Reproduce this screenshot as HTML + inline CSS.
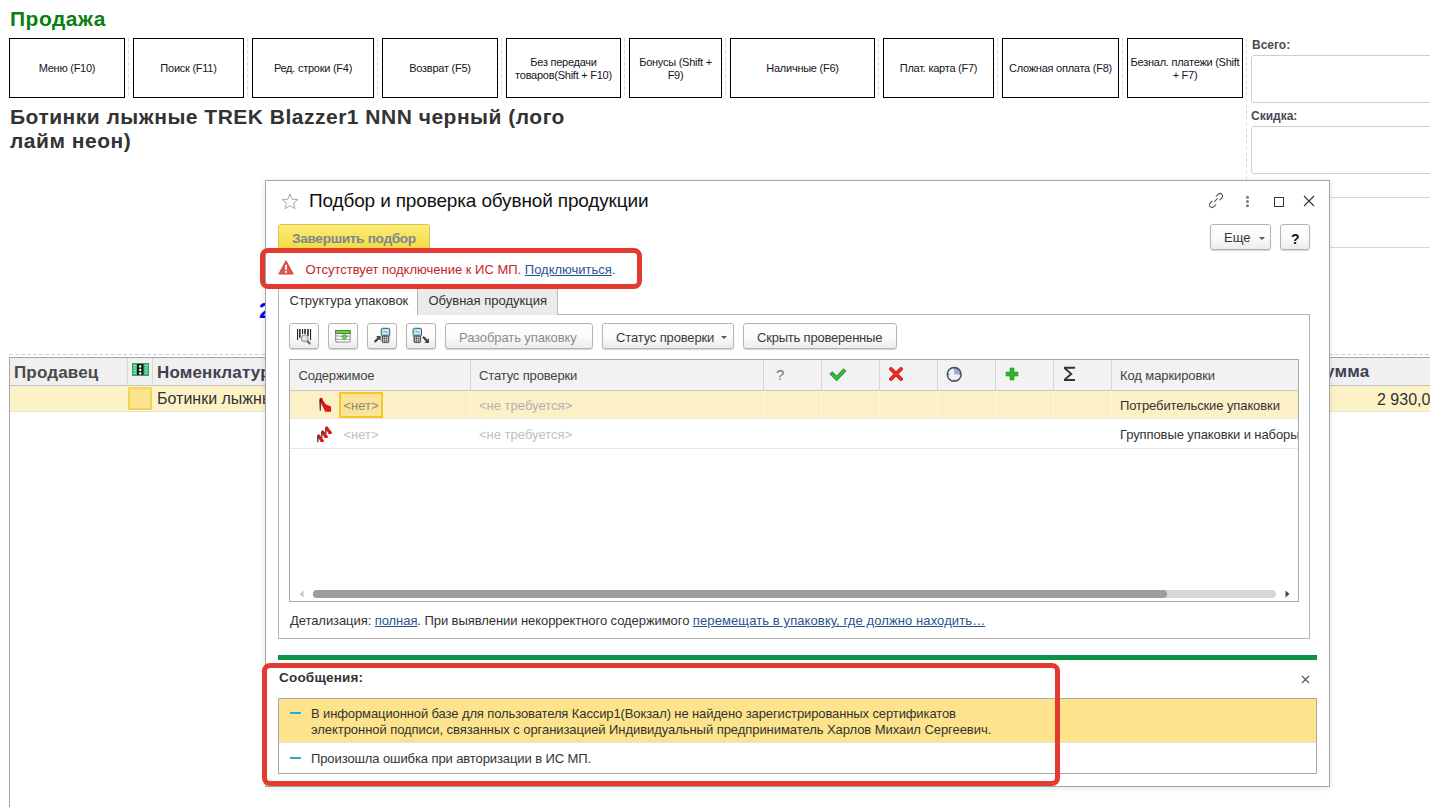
<!DOCTYPE html>
<html><head><meta charset="utf-8"><style>
html,body{margin:0;padding:0;}
body{width:1430px;height:807px;overflow:hidden;position:relative;background:#fff;font-family:"Liberation Sans",sans-serif;}
.a{position:absolute;}
.t{position:absolute;white-space:nowrap;}
.lnk{color:#2a5590;text-decoration:underline;}
</style></head><body>
<div class="t " style="left:10px;top:6.02px;font-size:21px;line-height:26px;color:#0b7f12;font-weight:700;letter-spacing:0.5px;">Продажа</div>
<div class="a" style="left:9px;top:38px;width:116px;height:60px;border:1px solid #000;background:#fff;box-sizing:border-box;"></div>
<div class="t" style="left:9px;width:116px;top:61.99px;font-size:11px;line-height:13px;letter-spacing:-0.25px;color:#141424;text-align:center;white-space:nowrap">Меню (F10)</div>
<div class="a" style="left:133px;top:38px;width:111px;height:60px;border:1px solid #000;background:#fff;box-sizing:border-box;"></div>
<div class="t" style="left:133px;width:111px;top:61.99px;font-size:11px;line-height:13px;letter-spacing:-0.25px;color:#141424;text-align:center;white-space:nowrap">Поиск (F11)</div>
<div class="a" style="left:252px;top:38px;width:122px;height:60px;border:1px solid #000;background:#fff;box-sizing:border-box;"></div>
<div class="t" style="left:252px;width:122px;top:61.99px;font-size:11px;line-height:13px;letter-spacing:-0.25px;color:#141424;text-align:center;white-space:nowrap">Ред. строки (F4)</div>
<div class="a" style="left:382px;top:38px;width:116px;height:60px;border:1px solid #000;background:#fff;box-sizing:border-box;"></div>
<div class="t" style="left:382px;width:116px;top:61.99px;font-size:11px;line-height:13px;letter-spacing:-0.25px;color:#141424;text-align:center;white-space:nowrap">Возврат (F5)</div>
<div class="a" style="left:506px;top:38px;width:115px;height:60px;border:1px solid #000;background:#fff;box-sizing:border-box;"></div>
<div class="t" style="left:506px;width:115px;top:55.99px;font-size:11px;line-height:13px;letter-spacing:-0.25px;color:#141424;text-align:center;white-space:nowrap">Без передачи<br>товаров(Shift + F10)</div>
<div class="a" style="left:629px;top:38px;width:93px;height:60px;border:1px solid #000;background:#fff;box-sizing:border-box;"></div>
<div class="t" style="left:629px;width:93px;top:55.99px;font-size:11px;line-height:13px;letter-spacing:-0.25px;color:#141424;text-align:center;white-space:nowrap">Бонусы (Shift +<br>F9)</div>
<div class="a" style="left:730px;top:38px;width:145px;height:60px;border:1px solid #000;background:#fff;box-sizing:border-box;"></div>
<div class="t" style="left:730px;width:145px;top:61.99px;font-size:11px;line-height:13px;letter-spacing:-0.25px;color:#141424;text-align:center;white-space:nowrap">Наличные (F6)</div>
<div class="a" style="left:883px;top:38px;width:111px;height:60px;border:1px solid #000;background:#fff;box-sizing:border-box;"></div>
<div class="t" style="left:883px;width:111px;top:61.99px;font-size:11px;line-height:13px;letter-spacing:-0.25px;color:#141424;text-align:center;white-space:nowrap">Плат. карта (F7)</div>
<div class="a" style="left:1002px;top:38px;width:117px;height:60px;border:1px solid #000;background:#fff;box-sizing:border-box;"></div>
<div class="t" style="left:1002px;width:117px;top:61.99px;font-size:11px;line-height:13px;letter-spacing:-0.25px;color:#141424;text-align:center;white-space:nowrap">Сложная оплата (F8)</div>
<div class="a" style="left:1127px;top:38px;width:116px;height:60px;border:1px solid #000;background:#fff;box-sizing:border-box;"></div>
<div class="t" style="left:1127px;width:116px;top:55.99px;font-size:11px;line-height:13px;letter-spacing:-0.25px;color:#141424;text-align:center;white-space:nowrap">Безнал. платежи (Shift<br>+ F7)</div>
<div class="a" style="left:128px;top:38px;width:1px;height:60px;background:repeating-linear-gradient(#dedede 0 4px,transparent 4px 6px);"></div>
<div class="a" style="left:247px;top:38px;width:1px;height:60px;background:repeating-linear-gradient(#dedede 0 4px,transparent 4px 6px);"></div>
<div class="a" style="left:377px;top:38px;width:1px;height:60px;background:repeating-linear-gradient(#dedede 0 4px,transparent 4px 6px);"></div>
<div class="a" style="left:501px;top:38px;width:1px;height:60px;background:repeating-linear-gradient(#dedede 0 4px,transparent 4px 6px);"></div>
<div class="a" style="left:624px;top:38px;width:1px;height:60px;background:repeating-linear-gradient(#dedede 0 4px,transparent 4px 6px);"></div>
<div class="a" style="left:725px;top:38px;width:1px;height:60px;background:repeating-linear-gradient(#dedede 0 4px,transparent 4px 6px);"></div>
<div class="a" style="left:878px;top:38px;width:1px;height:60px;background:repeating-linear-gradient(#dedede 0 4px,transparent 4px 6px);"></div>
<div class="a" style="left:997px;top:38px;width:1px;height:60px;background:repeating-linear-gradient(#dedede 0 4px,transparent 4px 6px);"></div>
<div class="a" style="left:1122px;top:38px;width:1px;height:60px;background:repeating-linear-gradient(#dedede 0 4px,transparent 4px 6px);"></div>
<div class="a" style="left:1246px;top:38px;width:1px;height:320px;background:repeating-linear-gradient(#dedede 0 4px,transparent 4px 6px);"></div>
<div class="t " style="left:1252px;top:38.34px;font-size:12px;line-height:15px;color:#4a4a52;font-weight:700;">Всего:</div>
<div class="a" style="left:1251px;top:55px;width:200px;height:48px;border:1px solid #cfcfcf;border-radius:3px;box-sizing:border-box;background:#fff;"></div>
<div class="t " style="left:1251px;top:109.34px;font-size:12px;line-height:15px;color:#4a4a52;font-weight:700;">Скидка:</div>
<div class="a" style="left:1251px;top:126px;width:200px;height:48px;border:1px solid #cfcfcf;border-radius:3px;box-sizing:border-box;background:#fff;"></div>
<div class="a" style="left:1251px;top:197px;width:200px;height:51px;border:1px solid #d6d6d6;border-radius:3px;box-sizing:border-box;background:#fff;"></div>
<div class="t " style="left:10px;top:105.02px;font-size:21px;line-height:24px;color:#333;font-weight:700;letter-spacing:0.5px;">Ботинки лыжные TREK Blazzer1 NNN черный (лого<br>лайм неон)</div>
<div class="t " style="left:259px;top:297.37px;font-size:22px;line-height:28px;color:#0000f0;font-weight:700;">2</div>
<div class="a" style="left:9px;top:354px;width:1421px;height:1px;background:repeating-linear-gradient(90deg,#d0d0d0 0 4px,transparent 4px 6px);"></div>
<div class="a" style="left:9px;top:357px;width:1421px;height:1px;background:#a6a6a6;"></div>
<div class="a" style="left:9px;top:357px;width:1px;height:450px;background:#a6a6a6;"></div>
<div class="a" style="left:10px;top:358px;width:1420px;height:27px;background:#f0f0f0;"></div>
<div class="a" style="left:10px;top:385px;width:1420px;height:1px;background:#c4c4c4;"></div>
<div class="a" style="left:127px;top:358px;width:1px;height:27px;background:#d8d8d8;"></div>
<div class="a" style="left:152px;top:358px;width:1px;height:27px;background:#d8d8d8;"></div>
<div class="t " style="left:14px;top:361.71px;font-size:17px;line-height:21px;color:#4a4a4a;font-weight:700;letter-spacing:0.15px;">Продавец</div>
<div class="t " style="left:157px;top:361.71px;font-size:17px;line-height:21px;color:#404050;font-weight:700;letter-spacing:0.15px;">Номенклатура</div>
<div class="t " style="left:1312.5px;top:360.81px;font-size:17px;line-height:21px;color:#404050;font-weight:700;letter-spacing:0.2px;">Сумма</div>
<div class="a" style="left:10px;top:386px;width:1420px;height:25px;background:#fdf2c6;"></div>
<div class="a" style="left:128px;top:387px;width:24px;height:23px;background:#fde490;border:2px solid #f8d456;box-sizing:border-box;"></div>
<div class="a" style="left:10px;top:411px;width:1420px;height:1px;background:#e4e4e4;"></div>
<div class="t " style="left:157px;top:389.45px;font-size:16px;line-height:20px;color:#333;">Ботинки лыжные</div>
<div class="t " style="left:1377px;top:389.95px;font-size:16px;line-height:20px;color:#333;">2 930,00</div>
<svg class="a" style="left:132px;top:363px" width="17" height="13" viewBox="0 0 17 13">
<rect x="0.5" y="0.5" width="16" height="12" fill="#42bc7c" stroke="#34a068" stroke-width="1"/>
<g fill="#a8e8c4"><rect x="1.5" y="2" width="2.5" height="1"/><rect x="1.5" y="4.5" width="2.5" height="1"/><rect x="1.5" y="7" width="2.5" height="1"/><rect x="1.5" y="9.5" width="2.5" height="1"/>
<rect x="13" y="2" width="2.5" height="1"/><rect x="13" y="4.5" width="2.5" height="1"/><rect x="13" y="7" width="2.5" height="1"/><rect x="13" y="9.5" width="2.5" height="1"/></g>
<rect x="5" y="1" width="6.5" height="11" fill="#151515"/>
<g fill="#f4f4f4"><path d="M8.2 1.8 L9.8 3.4 L8.2 5 L6.6 3.4 Z"/><path d="M8.2 5.3 L9.8 6.9 L8.2 8.5 L6.6 6.9 Z"/><path d="M8.2 8.8 L9.8 10.4 L8.2 12 L6.6 10.4 Z"/></g>
</svg>
<div class="a" style="left:265px;top:180px;width:1065px;height:607px;background:#fff;border:1px solid #a4a4a4;box-sizing:border-box;box-shadow:0 1px 6px rgba(0,0,0,0.11);"></div>
<svg class="a" style="left:281px;top:193px" width="18" height="17" viewBox="0 0 18 17">
<path d="M9 1.2 L11.2 6.3 L16.8 6.6 L12.5 10.2 L13.9 15.7 L9 12.7 L4.1 15.7 L5.5 10.2 L1.2 6.6 L6.8 6.3 Z" fill="none" stroke="#a8a8a8" stroke-width="1"/>
</svg>
<div class="t " style="left:309px;top:189.31px;font-size:19px;line-height:24px;color:#111;letter-spacing:-0.15px;">Подбор и проверка обувной продукции</div>
<svg class="a" style="left:1207px;top:192px" width="18" height="17" viewBox="0 0 18 17">
<g fill="none" stroke="#555" stroke-width="1.1" stroke-linecap="round">
<path d="M7.6 9.4 L10.4 6.6"/>
<path d="M9.2 4.2 L11.1 2.3 a2.6 2.6 0 0 1 3.7 3.7 L12.9 7.9"/>
<path d="M8.8 12.8 L6.9 14.7 a2.6 2.6 0 0 1 -3.7 -3.7 L5.1 9.1"/>
</g></svg>
<svg class="a" style="left:1245px;top:195px" width="5" height="13" viewBox="0 0 5 13">
<g fill="#7a7a7a"><circle cx="2.5" cy="2.3" r="1.5"/><circle cx="2.5" cy="6.5" r="1.5"/><circle cx="2.5" cy="10.7" r="1.5"/></g></svg>
<div class="a" style="left:1274px;top:197px;width:9.5px;height:9.5px;border:1.2px solid #333;box-sizing:border-box;"></div>
<svg class="a" style="left:1303px;top:195px" width="12" height="12" viewBox="0 0 12 12">
<path d="M1 1 L11 11 M11 1 L1 11" stroke="#333" stroke-width="1.1"/></svg>
<div class="a" style="left:278px;top:224px;width:152px;height:27px;background:linear-gradient(#fcec78,#f4da40);border:1px solid #d6c250;border-radius:3px;box-sizing:border-box;"></div>
<div class="t " style="left:292px;top:229.55px;font-size:13.7px;line-height:17px;color:#7d8690;font-weight:700;letter-spacing:-0.35px;">Завершить подбор</div>
<div class="a" style="left:1210px;top:224px;width:61px;height:26px;background:linear-gradient(#ffffff 0%,#fbfbfb 50%,#ececec 100%);border:1px solid #b4b4b4;border-radius:3px;box-sizing:border-box;box-shadow:0 1px 1px rgba(0,0,0,0.18);"></div>
<div class="t " style="left:1224px;top:230.39px;font-size:13px;line-height:16px;color:#333;">Еще</div>
<svg class="a" style="left:1259px;top:237px" width="6" height="3" viewBox="0 0 6 3"><path d="M0 0 H6 L3 3 Z" fill="#555"/></svg>
<div class="a" style="left:1280px;top:224px;width:30px;height:26px;background:linear-gradient(#ffffff 0%,#fbfbfb 50%,#ececec 100%);border:1px solid #b4b4b4;border-radius:3px;box-sizing:border-box;box-shadow:0 1px 1px rgba(0,0,0,0.18);"></div>
<div class="t " style="left:1291px;top:229.65px;font-size:14px;line-height:18px;color:#111;font-weight:700;">?</div>
<svg class="a" style="left:278px;top:260px" width="16" height="15" viewBox="0 0 16 15">
<path d="M8 1 L15 14 H1 Z" fill="#e05550" stroke="#d04844" stroke-width="1.2" stroke-linejoin="round"/>
<rect x="7.1" y="4.8" width="1.8" height="5" fill="#fff"/><rect x="7.1" y="11" width="1.8" height="1.8" fill="#fff"/>
</svg>
<div class="t " style="left:305.5px;top:262.39px;font-size:13px;line-height:16px;color:#c41e2a;">Отсутствует подключение к ИС МП. <span style="color:#2a5590;text-decoration:underline">Подключиться</span><span style="color:#555">.</span></div>
<div class="a" style="left:278px;top:314px;width:1032px;height:325px;border:1px solid #b4b4b4;box-sizing:border-box;background:#fff;"></div>
<div class="a" style="left:417px;top:288px;width:141px;height:27px;background:#ebebeb;border:1px solid #bcbcbc;border-bottom:none;border-radius:2px 2px 0 0;box-sizing:border-box;"></div>
<div class="a" style="left:278px;top:288px;width:140px;height:27px;background:#fff;border:1px solid #b4b4b4;border-bottom:none;border-radius:2px 2px 0 0;box-sizing:border-box;"></div>
<div class="t " style="left:289.5px;top:293.49px;font-size:13px;line-height:16px;color:#333;">Структура упаковок</div>
<div class="t " style="left:428.5px;top:293.19px;font-size:13px;line-height:16px;color:#333;">Обувная продукция</div>
<div class="a" style="left:289px;top:323px;width:30px;height:26px;background:linear-gradient(#ffffff 0%,#fbfbfb 50%,#ececec 100%);border:1px solid #b4b4b4;border-radius:3px;box-sizing:border-box;box-shadow:0 1px 1px rgba(0,0,0,0.18);"></div>
<div class="a" style="left:328px;top:323px;width:30px;height:26px;background:linear-gradient(#ffffff 0%,#fbfbfb 50%,#ececec 100%);border:1px solid #b4b4b4;border-radius:3px;box-sizing:border-box;box-shadow:0 1px 1px rgba(0,0,0,0.18);"></div>
<div class="a" style="left:367px;top:323px;width:30px;height:26px;background:linear-gradient(#ffffff 0%,#fbfbfb 50%,#ececec 100%);border:1px solid #b4b4b4;border-radius:3px;box-sizing:border-box;box-shadow:0 1px 1px rgba(0,0,0,0.18);"></div>
<div class="a" style="left:406px;top:323px;width:30px;height:26px;background:linear-gradient(#ffffff 0%,#fbfbfb 50%,#ececec 100%);border:1px solid #b4b4b4;border-radius:3px;box-sizing:border-box;box-shadow:0 1px 1px rgba(0,0,0,0.18);"></div>
<div class="a" style="left:445px;top:323px;width:148px;height:26px;background:linear-gradient(#ffffff 0%,#fbfbfb 50%,#ececec 100%);border:1px solid #b4b4b4;border-radius:3px;box-sizing:border-box;box-shadow:0 1px 1px rgba(0,0,0,0.18);"></div>
<div class="t " style="left:459px;top:329.99px;font-size:13px;line-height:16px;color:#8c8c8c;letter-spacing:-0.1px;">Разобрать упаковку</div>
<div class="a" style="left:602px;top:323px;width:132px;height:26px;background:linear-gradient(#ffffff 0%,#fbfbfb 50%,#ececec 100%);border:1px solid #b4b4b4;border-radius:3px;box-sizing:border-box;box-shadow:0 1px 1px rgba(0,0,0,0.18);"></div>
<div class="t " style="left:616px;top:329.99px;font-size:13px;line-height:16px;color:#3a3a3a;letter-spacing:-0.15px;">Статус проверки</div>
<svg class="a" style="left:721px;top:336px" width="6" height="3" viewBox="0 0 6 3"><path d="M0 0 H6 L3 3 Z" fill="#555"/></svg>
<div class="a" style="left:743px;top:323px;width:154px;height:26px;background:linear-gradient(#ffffff 0%,#fbfbfb 50%,#ececec 100%);border:1px solid #b4b4b4;border-radius:3px;box-sizing:border-box;box-shadow:0 1px 1px rgba(0,0,0,0.18);"></div>
<div class="t " style="left:757px;top:329.99px;font-size:13px;line-height:16px;color:#3a3a3a;letter-spacing:-0.2px;">Скрыть проверенные</div>
<svg class="a" style="left:293px;top:325px" width="24" height="22" viewBox="0 0 24 22">
<g fill="#262626"><rect x="4" y="4" width="1.1" height="11"/><rect x="6.1" y="4" width="1.5" height="8.7"/><rect x="9" y="4" width="1.1" height="5"/><rect x="11.2" y="4" width="1.6" height="5"/><rect x="14.2" y="4" width="1.6" height="6.9"/><rect x="17" y="4" width="1.1" height="11"/></g>
<path d="M14.2 15.8 L16.6 18.4" stroke="#6a625c" stroke-width="2.2" stroke-linecap="round"/>
<circle cx="11.8" cy="13.3" r="3.3" fill="#d8e6f8" stroke="#b09488" stroke-width="1.2"/>
</svg>
<svg class="a" style="left:331px;top:325px" width="24" height="22" viewBox="0 0 24 22">
<rect x="4.6" y="5.5" width="14.6" height="11.6" rx="0.8" fill="#fff" stroke="#8a8a8a" stroke-width="1"/>
<rect x="4.6" y="5.5" width="14.6" height="3" fill="#78c868" stroke="#3c8a22" stroke-width="1"/>
<g stroke="#9a9a9a" stroke-width="0.9"><line x1="5" y1="11.1" x2="19" y2="11.1"/><line x1="5" y1="14.4" x2="19" y2="14.4"/></g>
<g stroke="#777" stroke-width="0.8"><line x1="6.2" y1="10" x2="6.2" y2="11"/><line x1="6.2" y1="13.3" x2="6.2" y2="14.3"/><line x1="6.2" y1="16" x2="6.2" y2="17"/></g>
<path d="M12.2 7.8 H14.6 V11 H16.8 L13.4 15.3 L10 11 H12.2 Z" fill="#5cd04c" stroke="#48a838" stroke-width="0.6"/>
</svg>
<svg class="a" style="left:370px;top:325px" width="24" height="22" viewBox="0 0 24 22">
<rect x="11.3" y="3.3" width="8.4" height="8" rx="1.3" fill="#a8dcf4" stroke="#485460" stroke-width="1"/>
<rect x="12.5" y="4.5" width="6" height="4.6" fill="#c4ecfc"/>
<path d="M13.3 6 L17.6 7.6" stroke="#5a9cd0" stroke-width="0.9"/>
<rect x="11.600000000000001" y="9.4" width="7.8" height="1.3" fill="#9cc8a0"/>
<rect x="12.200000000000001" y="10.8" width="6.6" height="6.8" rx="1" fill="#4a4a4a" stroke="#3a3a3a" stroke-width="0.8"/>
<g fill="#f2dc48"><rect x="13.0" y="11.6" width="1.3" height="1.4"/><rect x="14.9" y="11.6" width="1.3" height="1.4"/></g>
<g fill="#f4f4f4"><rect x="16.8" y="11.6" width="1.3" height="1.4"/><rect x="13.0" y="13.6" width="1.3" height="1.3"/><rect x="14.9" y="13.6" width="1.3" height="1.3"/><rect x="16.8" y="13.6" width="1.3" height="1.3"/><rect x="13.0" y="15.4" width="1.3" height="1.3"/><rect x="14.9" y="15.4" width="1.3" height="1.3"/><rect x="16.8" y="15.4" width="1.3" height="1.3"/></g>
<path d="M4.6 17 L9 12.6" stroke="#454545" stroke-width="2.3"/><path d="M6 11.1 H10.7 V15.8 Z" fill="#454545"/>
</svg>
<svg class="a" style="left:406px;top:325px" width="24" height="22" viewBox="0 0 24 22">
<rect x="7.1" y="3.3" width="8.4" height="8" rx="1.3" fill="#a8dcf4" stroke="#485460" stroke-width="1"/>
<rect x="8.299999999999999" y="4.5" width="6" height="4.6" fill="#c4ecfc"/>
<path d="M9.1 6 L13.399999999999999 7.6" stroke="#5a9cd0" stroke-width="0.9"/>
<rect x="7.3999999999999995" y="9.4" width="7.8" height="1.3" fill="#9cc8a0"/>
<rect x="8.0" y="10.8" width="6.6" height="6.8" rx="1" fill="#4a4a4a" stroke="#3a3a3a" stroke-width="0.8"/>
<g fill="#f2dc48"><rect x="8.8" y="11.6" width="1.3" height="1.4"/><rect x="10.7" y="11.6" width="1.3" height="1.4"/></g>
<g fill="#f4f4f4"><rect x="12.6" y="11.6" width="1.3" height="1.4"/><rect x="8.8" y="13.6" width="1.3" height="1.3"/><rect x="10.7" y="13.6" width="1.3" height="1.3"/><rect x="12.6" y="13.6" width="1.3" height="1.3"/><rect x="8.8" y="15.4" width="1.3" height="1.3"/><rect x="10.7" y="15.4" width="1.3" height="1.3"/><rect x="12.6" y="15.4" width="1.3" height="1.3"/></g>
<path d="M17 11.8 L21.3 16.1" stroke="#454545" stroke-width="2.3"/><path d="M23 13.2 V17.9 H18.3 Z" fill="#454545"/>
</svg>
<div class="a" style="left:289px;top:359px;width:1010px;height:243px;border:1px solid #a8a8a8;box-sizing:border-box;background:#fff;"></div>
<div class="a" style="left:290px;top:360px;width:1008px;height:30px;background:#f2f2f2;"></div>
<div class="a" style="left:290px;top:390px;width:1008px;height:1px;background:#c8c8c8;"></div>
<div class="a" style="left:470px;top:360px;width:1px;height:30px;background:#d4d4d4;"></div>
<div class="a" style="left:763px;top:360px;width:1px;height:30px;background:#d4d4d4;"></div>
<div class="a" style="left:821px;top:360px;width:1px;height:30px;background:#d4d4d4;"></div>
<div class="a" style="left:879px;top:360px;width:1px;height:30px;background:#d4d4d4;"></div>
<div class="a" style="left:937px;top:360px;width:1px;height:30px;background:#d4d4d4;"></div>
<div class="a" style="left:995px;top:360px;width:1px;height:30px;background:#d4d4d4;"></div>
<div class="a" style="left:1053px;top:360px;width:1px;height:30px;background:#d4d4d4;"></div>
<div class="a" style="left:1111px;top:360px;width:1px;height:30px;background:#d4d4d4;"></div>
<div class="t " style="left:298.5px;top:367.69px;font-size:13px;line-height:16px;color:#444;letter-spacing:-0.2px;">Содержимое</div>
<div class="t " style="left:479px;top:367.69px;font-size:13px;line-height:16px;color:#444;letter-spacing:-0.15px;">Статус проверки</div>
<div class="t " style="left:1120px;top:367.69px;font-size:13px;line-height:16px;color:#444;letter-spacing:-0.1px;">Код маркировки</div>
<div class="t " style="left:776px;top:365.30px;font-size:15px;line-height:19px;color:#777;">?</div>
<svg class="a" style="left:826px;top:362px" width="24" height="24" viewBox="0 0 24 24">
<path d="M6.2 12 L10.7 16.4 L17.6 9" fill="none" stroke="#4a7a4a" stroke-width="4" stroke-linejoin="miter" stroke-linecap="square"/>
<path d="M6.2 12 L10.7 16.4 L17.6 9" fill="none" stroke="#22c428" stroke-width="2.6" stroke-linejoin="miter" stroke-linecap="square"/>
</svg>
<svg class="a" style="left:889px;top:367px" width="14" height="14" viewBox="0 0 14 14">
<path d="M2 2 L12 12 M12 2 L2 12" stroke="#b81818" stroke-width="3.8" stroke-linecap="round"/>
<path d="M2 2 L12 12 M12 2 L2 12" stroke="#e8302c" stroke-width="2.4" stroke-linecap="round"/>
</svg>
<svg class="a" style="left:942px;top:362px" width="24" height="24" viewBox="0 0 24 24">
<path d="M12.2 12.35 V5.5 A6.85 6.85 0 0 1 19.05 12.35 Z" fill="#94acd8"/>
<circle cx="12.2" cy="12.35" r="6.9" fill="none" stroke="#3f4c58" stroke-width="1.5"/>
<g stroke="#d84050" stroke-width="1.2"><line x1="12.2" y1="5.6" x2="12.2" y2="7.2"/><line x1="17.3" y1="12.35" x2="18.9" y2="12.35"/><line x1="12.2" y1="17.4" x2="12.2" y2="19"/></g>
<line x1="5.6" y1="12.35" x2="7.3" y2="12.35" stroke="#555" stroke-width="1.1"/>
</svg>
<svg class="a" style="left:1005px;top:367px" width="14" height="14" viewBox="0 0 14 14">
<path d="M5 1 H9 V5 H13 V9 H9 V13 H5 V9 H1 V5 H5 Z" fill="#2fb52f" stroke="#1e9a1e" stroke-width="0.6"/>
</svg>
<svg class="a" style="left:1058px;top:362px" width="24" height="24" viewBox="0 0 24 24">
<path d="M6 5.8 H17 M6.7 6.2 L13.2 11.9 L6.7 17.6 M6 18 H17" fill="none" stroke="#2a343c" stroke-width="1.9" stroke-linejoin="miter"/>
</svg>
<div class="a" style="left:290px;top:391px;width:1008px;height:27px;background:#fcf1c6;"></div>
<div class="a" style="left:470px;top:391px;width:1px;height:27px;background:#fdf7e2;"></div>
<div class="a" style="left:763px;top:391px;width:1px;height:27px;background:#fdf7e2;"></div>
<div class="a" style="left:821px;top:391px;width:1px;height:27px;background:#fdf7e2;"></div>
<div class="a" style="left:879px;top:391px;width:1px;height:27px;background:#fdf7e2;"></div>
<div class="a" style="left:937px;top:391px;width:1px;height:27px;background:#fdf7e2;"></div>
<div class="a" style="left:995px;top:391px;width:1px;height:27px;background:#fdf7e2;"></div>
<div class="a" style="left:1053px;top:391px;width:1px;height:27px;background:#fdf7e2;"></div>
<div class="a" style="left:1111px;top:391px;width:1px;height:27px;background:#fdf7e2;"></div>
<div class="a" style="left:290px;top:418px;width:1008px;height:1px;background:#e6e6e6;"></div>
<div class="a" style="left:290px;top:448px;width:1008px;height:1px;background:#e6e6e6;"></div>
<div class="a" style="left:339px;top:392px;width:44px;height:26px;background:#fde39a;border:2px solid #f6c52a;box-sizing:border-box;"></div>
<div class="t " style="left:343.5px;top:397.99px;font-size:13px;line-height:16px;color:#8a8a80;">&lt;нет&gt;</div>
<div class="t " style="left:479px;top:397.99px;font-size:13px;line-height:16px;color:#b0b0b0;">&lt;не требуется&gt;</div>
<div class="t " style="left:1120px;top:398.09px;font-size:13px;line-height:16px;color:#333;letter-spacing:-0.1px;">Потребительские упаковки</div>
<div class="t " style="left:343.5px;top:426.99px;font-size:13px;line-height:16px;color:#c0c0c0;">&lt;нет&gt;</div>
<div class="t " style="left:479px;top:426.99px;font-size:13px;line-height:16px;color:#c0c0c0;">&lt;не требуется&gt;</div>
<div class="a" style="left:1111px;top:420px;width:187px;height:28px;overflow:hidden">
<div class="t " style="left:9px;top:6.99px;font-size:13px;line-height:16px;color:#333;letter-spacing:-0.1px;">Групповые упаковки и наборы</div>
</div>
<svg class="a" style="left:314px;top:394px" width="22" height="22" viewBox="0 0 22 22">
<path d="M5.3 5 C5.6 3.5 7.6 3.2 8.3 4.3 L9.4 7 L11.2 9.8 C12.6 11.2 15 11.6 16.6 12.2 L17.1 13 L17.1 17.7 L10.9 17.7 L10.4 16 L9 13 L7.4 10.2 L6.6 7 Z" fill="#e4141a"/>
<path d="M6.8 4.6 L8.6 7.6 L10.6 10.6" stroke="#a80c10" stroke-width="0.8" fill="none"/>
<path d="M5.4 5.8 L6.8 5.8 L6.7 16.8 L5.8 16.8 Z" fill="#0a0a0a"/>
</svg>
<svg class="a" style="left:313px;top:422px" width="24" height="24" viewBox="0 0 24 24">
<g transform="translate(12.3 4.3)"><path d="M0.3 0.4 C0.7 -0.4 2 -0.3 2.6 0.7 L5 4.1 C5.9 4.7 6.5 5.2 6.5 6.2 L6.5 7.6 L3.1 7.6 C2.8 6 2.1 5 1.1 4.4 Z" fill="#e4141a"/><path d="M0 1.2 L1 1.2 L1.1 8 L0.1 8 Z" fill="#000"/></g>
<g transform="translate(8.3 8.3)"><path d="M0.3 0.4 C0.7 -0.4 2 -0.3 2.6 0.7 L5 4.1 C5.9 4.7 6.5 5.2 6.5 6.2 L6.5 7.6 L3.1 7.6 C2.8 6 2.1 5 1.1 4.4 Z" fill="#e4141a"/><path d="M0 1.2 L1 1.2 L1.1 8 L0.1 8 Z" fill="#000"/></g>
<g transform="translate(4.3 12.3)"><path d="M0.3 0.4 C0.7 -0.4 2 -0.3 2.6 0.7 L5 4.1 C5.9 4.7 6.5 5.2 6.5 6.2 L6.5 7.6 L3.1 7.6 C2.8 6 2.1 5 1.1 4.4 Z" fill="#e4141a"/><path d="M0 1.2 L1 1.2 L1.1 8 L0.1 8 Z" fill="#000"/></g>
</svg>
<div class="a" style="left:313px;top:590px;width:963px;height:8px;background:#d8d8d8;border-radius:4px;"></div>
<div class="a" style="left:313px;top:590px;width:854px;height:8px;background:#9e9e9e;border-radius:4px;"></div>
<svg class="a" style="left:299px;top:590px" width="5" height="8" viewBox="0 0 5 8"><path d="M4.5 0.5 V7.5 L0.5 4 Z" fill="#c8c8c8"/></svg>
<svg class="a" style="left:1285px;top:590px" width="5" height="8" viewBox="0 0 5 8"><path d="M0.5 0.5 V7.5 L4.5 4 Z" fill="#444"/></svg>
<div class="t " style="left:290px;top:613.39px;font-size:13px;line-height:16px;color:#333;letter-spacing:-0.07px;">Детализация: <span class="lnk">полная</span>. При выявлении некорректного содержимого <span class="lnk" style="letter-spacing:0.1px">перемещать в упаковку, где должно находить…</span></div>
<div class="a" style="left:278px;top:655px;width:1039px;height:5px;background:#0b9447;"></div>
<div class="t " style="left:279px;top:669.42px;font-size:13.5px;line-height:17px;color:#333;font-weight:700;letter-spacing:0.2px;">Сообщения:</div>
<svg class="a" style="left:1301px;top:675px" width="9" height="9" viewBox="0 0 9 9">
<path d="M1 1 L8 8 M8 1 L1 8" stroke="#555" stroke-width="1.1"/></svg>
<div class="a" style="left:278px;top:698px;width:1039px;height:76px;border:1px solid #a8a8a8;box-sizing:border-box;background:#fff;"></div>
<div class="a" style="left:279px;top:699px;width:1037px;height:43px;background:#fde48c;"></div>
<div class="a" style="left:279px;top:742px;width:1037px;height:1px;background:#e4e0ea;"></div>
<div class="a" style="left:290px;top:712px;width:11px;height:2px;background:#2aa6e0;"></div>
<div class="a" style="left:290px;top:757px;width:11px;height:2px;background:#3aa0c8;"></div>
<div class="t " style="left:311px;top:705.99px;font-size:13px;line-height:16px;color:#333;letter-spacing:-0.11px;">В информационной базе для пользователя Кассир1(Вокзал) не найдено зарегистрированных сертификатов</div>
<div class="t " style="left:311px;top:722.09px;font-size:13px;line-height:16px;color:#333;letter-spacing:-0.058px;">электронной подписи, связанных с организацией Индивидуальный предприниматель Харлов Михаил Сергеевич.</div>
<div class="t " style="left:311px;top:750.79px;font-size:13px;line-height:16px;color:#333;letter-spacing:-0.1px;">Произошла ошибка при авторизации в ИС МП.</div>
<div class="a" style="left:260px;top:248px;width:382px;height:41px;border:5px solid #e23a2e;border-radius:8px;box-sizing:border-box;"></div>
<div class="a" style="left:262px;top:663px;width:798px;height:123px;border:5px solid #e23a2e;border-radius:8px;box-sizing:border-box;"></div>
</body></html>
